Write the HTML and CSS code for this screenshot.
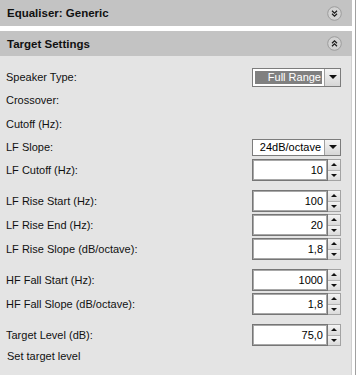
FILE: index.html
```html
<!DOCTYPE html>
<html>
<head>
<meta charset="utf-8">
<link rel="stylesheet" href="styles.css">
</head>
<body>
<div class="page">
  <div class="panel">
    <div class="hdr">
      <span class="title">Equaliser: Generic</span>
      <svg class="circ" width="15" height="15" viewBox="0 0 15 15">
        <circle cx="7.5" cy="7.5" r="6.8" fill="#d2d2d2" stroke="#9c9c9c"/>
        <polyline points="5,4.8 7.5,7.2 10,4.8" fill="none" stroke="#1a1a1a" stroke-width="1.2"/>
        <polyline points="5,7.8 7.5,10.2 10,7.8" fill="none" stroke="#1a1a1a" stroke-width="1.2"/>
      </svg>
    </div>
    <div class="hgap"></div>
    <div class="hdr h2">
      <span class="title">Target Settings</span>
      <svg class="circ" width="15" height="15" viewBox="0 0 15 15">
        <circle cx="7.5" cy="7.5" r="6.8" fill="#d2d2d2" stroke="#9c9c9c"/>
        <polyline points="5,7.2 7.5,4.8 10,7.2" fill="none" stroke="#1a1a1a" stroke-width="1.2"/>
        <polyline points="5,10.2 7.5,7.8 10,10.2" fill="none" stroke="#1a1a1a" stroke-width="1.2"/>
      </svg>
    </div>
    <div class="content">
      <div class="row r22">
        <span class="lbl">Speaker Type:</span>
        <div class="combo">
          <span class="val sel">Full Range</span>
          <span class="arrow"><span class="tri-down"></span></span>
        </div>
      </div>
      <div class="row"><span class="lbl">Crossover:</span></div>
      <div class="row"><span class="lbl">Cutoff (Hz):</span></div>
      <div class="row r22">
        <span class="lbl">LF Slope:</span>
        <div class="combo small">
          <span class="val">24dB/octave</span>
          <span class="arrow"><span class="tri-down"></span></span>
        </div>
      </div>
      <div class="row">
        <span class="lbl">LF Cutoff (Hz):</span>
        <div class="spin"><span class="sbox">10</span><span class="sbtns"><span class="sb"><span class="t-up"></span></span><span class="sb"><span class="t-dn"></span></span></span></div>
      </div>
      <div class="row grp">
        <span class="lbl">LF Rise Start (Hz):</span>
        <div class="spin"><span class="sbox">100</span><span class="sbtns"><span class="sb"><span class="t-up"></span></span><span class="sb"><span class="t-dn"></span></span></span></div>
      </div>
      <div class="row">
        <span class="lbl">LF Rise End (Hz):</span>
        <div class="spin"><span class="sbox">20</span><span class="sbtns"><span class="sb"><span class="t-up"></span></span><span class="sb"><span class="t-dn"></span></span></span></div>
      </div>
      <div class="row">
        <span class="lbl">LF Rise Slope (dB/octave):</span>
        <div class="spin"><span class="sbox">1,8</span><span class="sbtns"><span class="sb"><span class="t-up"></span></span><span class="sb"><span class="t-dn"></span></span></span></div>
      </div>
      <div class="row grp">
        <span class="lbl">HF Fall Start (Hz):</span>
        <div class="spin"><span class="sbox">1000</span><span class="sbtns"><span class="sb"><span class="t-up"></span></span><span class="sb"><span class="t-dn"></span></span></span></div>
      </div>
      <div class="row">
        <span class="lbl">HF Fall Slope (dB/octave):</span>
        <div class="spin"><span class="sbox">1,8</span><span class="sbtns"><span class="sb"><span class="t-up"></span></span><span class="sb"><span class="t-dn"></span></span></span></div>
      </div>
      <div class="row grp">
        <span class="lbl">Target Level (dB):</span>
        <div class="spin"><span class="sbox">75,0</span><span class="sbtns"><span class="sb"><span class="t-up"></span></span><span class="sb"><span class="t-dn"></span></span></span></div>
      </div>
      <div class="row r18"><span class="lbl note">Set target level</span></div>
    </div>
  </div>
  <div class="gutter"></div>
  <div class="edge"></div>
</div>
</body>
</html>
```
FILE: styles.css
```css
html, body {
  margin: 0;
  padding: 0;
  height: 100%;
}
body {
  background: #ffffff;
  font-family: "Liberation Sans", Arial, sans-serif;
  font-size: 11px;
  color: #000;
}
.page {
  display: flex;
  height: 375px;
}
.panel {
  width: 352px;
  display: flex;
  flex-direction: column;
}
.hdr {
  height: 26px;
  background: #c3c3c3;
  display: flex;
  align-items: center;
  justify-content: space-between;
  padding: 0 10px 0 7px;
  font-weight: bold;
  font-size: 11.5px;
  color: #111;
}
.hdr.h2 {
  height: 25px;
}
.hgap {
  height: 5px;
}
.circ {
  display: block;
}
.content {
  flex: 1;
  background: #e4e4e4;
  box-sizing: border-box;
  padding: 10px 10px 0 6px;
  border-right: 1px solid #d0d0d0;
}
.row {
  display: flex;
  align-items: center;
  justify-content: space-between;
  height: 24px;
}
.row.r22 {
  height: 22px;
}
.row.r18 {
  height: 18px;
}
.row.grp {
  margin-top: 7px;
}
.lbl {
  white-space: nowrap;
  color: #111;
}
.note {
  margin-left: 1px;
}
.combo {
  width: 89px;
  height: 19px;
  box-sizing: border-box;
  border: 1px solid #7c7c7c;
  background: #fff;
  display: flex;
}
.combo.small {
  height: 17px;
}
.combo .val {
  flex: 1;
  margin: 2px;
  display: flex;
  align-items: center;
  justify-content: flex-end;
  padding-right: 1px;
  white-space: nowrap;
}
.combo .val.sel {
  background: #808080;
  color: #fff;
}
.arrow {
  width: 15px;
  border-left: 1px solid #a0a0a0;
  background: linear-gradient(#f4f4f4, #d6d6d6);
  display: flex;
  align-items: center;
  justify-content: center;
}
.tri-down {
  width: 0;
  height: 0;
  border-left: 4px solid transparent;
  border-right: 4px solid transparent;
  border-top: 4px solid #111;
}
.spin {
  width: 89px;
  height: 22px;
  display: flex;
}
.sbox {
  flex: 1;
  box-sizing: border-box;
  border: 1px solid #767676;
  box-shadow: inset 1px 1px 0 #a8a8a8, inset -1px -1px 0 #a8a8a8;
  background: #fff;
  display: flex;
  align-items: center;
  justify-content: flex-end;
  padding-right: 4px;
  font-size: 11px;
}
.sbtns {
  width: 13px;
  display: flex;
  flex-direction: column;
  box-sizing: border-box;
  border: 1px solid #a3a3a3;
  border-left: none;
}
.sb {
  flex: 1;
  display: flex;
  align-items: center;
  justify-content: center;
  background: linear-gradient(#f4f4f4, #dadada);
}
.sb + .sb {
  border-top: 1px solid #b4b4b4;
}
.t-up {
  width: 0;
  height: 0;
  border-left: 3px solid transparent;
  border-right: 3px solid transparent;
  border-bottom: 3px solid #111;
}
.t-dn {
  width: 0;
  height: 0;
  border-left: 3px solid transparent;
  border-right: 3px solid transparent;
  border-top: 3px solid #111;
}
.gutter {
  width: 3px;
}
.edge {
  width: 1px;
  background: #a0a0a0;
}
```
